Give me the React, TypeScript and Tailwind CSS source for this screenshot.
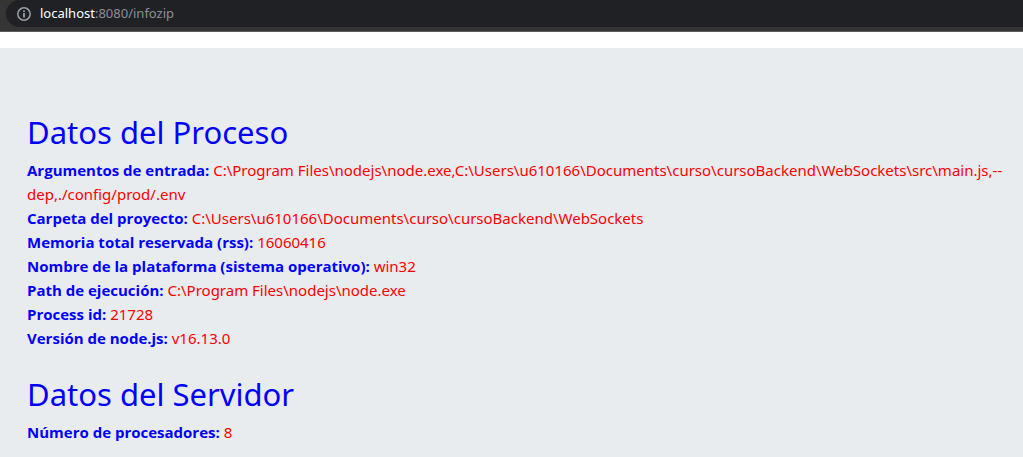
import React from "react";

type Entry = { label: string; value: React.ReactNode };

const processInfo: Entry[] = [
  {
    label: "Argumentos de entrada:",
    value: (
      <>
        {"C:\\Program Files\\nodejs\\node.exe,C:\\Users\\u610166\\Documents\\curso\\cursoBackend\\WebSockets\\src\\main.js,"}
        <span className="whitespace-nowrap">--</span>
        <wbr />
        dep,./config/prod/.env
      </>
    ),
  },
  { label: "Carpeta del proyecto:", value: "C:\\Users\\u610166\\Documents\\curso\\cursoBackend\\WebSockets" },
  { label: "Memoria total reservada (rss):", value: "16060416" },
  { label: "Nombre de la plataforma (sistema operativo):", value: "win32" },
  { label: "Path de ejecución:", value: "C:\\Program Files\\nodejs\\node.exe" },
  { label: "Process id:", value: "21728" },
  { label: "Versión de node.js:", value: "v16.13.0" },
];

const serverInfo: Entry[] = [{ label: "Número de procesadores:", value: "8" }];

function Section({ title, entries }: { title: string; entries: Entry[] }) {
  return (
    <section>
      <h2 className="mb-2 font-['Noto_Sans','Open_Sans',sans-serif] text-[31px] leading-9 font-normal">{title}</h2>
      <ul>
        {entries.map((e) => (
          <li key={e.label} className="text-[15px] leading-6">
            <b className="font-bold">{e.label}</b>{" "}
            <span className="font-['Noto_Sans','Open_Sans',sans-serif] font-normal text-[#ff0000]">{e.value}</span>
          </li>
        ))}
      </ul>
    </section>
  );
}

export default function App() {
  return (
    <div className="flex min-h-screen flex-col bg-white font-['Open_Sans','Noto_Sans',sans-serif]">
      <header className="h-8 border-b border-[#5c5c5c] bg-[#353535] pl-1.5">
        <div className="flex h-[27px] items-center gap-2 rounded-l-full bg-[#202124] pl-[11px]">
          <svg className="size-3.5" viewBox="0 0 14 14" fill="none" stroke="#9aa0a6" strokeWidth="1.5" aria-hidden="true">
            <circle cx="7" cy="7" r="6.2" />
            <path d="M7 6v4.4M7 3.4v1.6" strokeWidth="1.8" />
          </svg>
          <span className="pl-px font-['Noto_Sans','Open_Sans',sans-serif] text-[13px] text-[#8d9095]">
            <span className="text-white">localhost</span>:8080/infozip
          </span>
        </div>
      </header>
      <main className="mt-4 flex flex-1 flex-col gap-[26px] bg-[#e9ecef] pt-[66px] pr-3 pb-2 pl-[27px] text-[#0000ff]">
        <Section title="Datos del Proceso" entries={processInfo} />
        <Section title="Datos del Servidor" entries={serverInfo} />
      </main>
    </div>
  );
}
